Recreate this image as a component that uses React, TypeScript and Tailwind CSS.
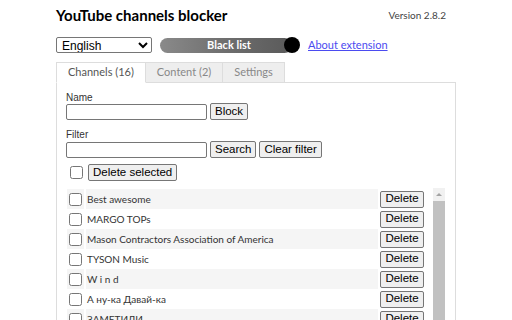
import { useState } from 'react';

const channels = [
  'Best awesome',
  'MARGO TOPs',
  'Mason Contractors Association of America',
  'TYSON Music',
  'W i n d',
  'А ну-ка Давай-ка',
  'ЗАМЕТИЛИ',
];

function Btn({ children, className = '' }: { children: React.ReactNode; className?: string }) {
  return (
    <button
      className={`h-[17px] px-[4px] bg-[#efefef] border border-[#767676] rounded-[2px] text-[11.5px] leading-none text-black font-['Liberation_Sans',sans-serif] ${className}`}
    >
      {children}
    </button>
  );
}

function Box() {
  return <input type="checkbox" className="m-0 w-[13px] h-[13px] accent-gray-600" />;
}

export default function App() {
  const [tab] = useState(0);
  const tabs = ['Channels (16)', 'Content (2)', 'Settings'];

  return (
    <div className="w-full h-[320px] overflow-hidden bg-white">
      <div className="w-[400px] mx-auto font-['Lato',sans-serif] text-[#333]">
        {/* Header */}
        <div className="flex justify-between items-start pt-[5px]">
          <h1 className="text-[15px] font-bold text-black leading-[20px]">YouTube channels blocker</h1>
          <span className="text-[10px] text-[#444] mt-[3px] mr-[10px]">Version 2.8.2</span>
        </div>

        {/* Controls */}
        <div className="flex items-center mt-[12px] h-[16px]">
          <select className="w-[96px] h-[16px] border border-[#767676] rounded-[2px] text-[12px] leading-none px-[1px] font-['Liberation_Sans',sans-serif] text-black">
            <option>English</option>
          </select>
          <div className="flex items-center ml-[8px]">
            <div className="w-[132px] h-[15px] rounded-full bg-gradient-to-r from-[#8a8a8a] via-[#6e6e6e] to-[#5a5a5a] flex items-center justify-center text-white text-[11px] font-bold pl-[6px]">
              Black list
            </div>
            <div className="w-[16px] h-[16px] rounded-full bg-black -ml-[8px]" />
          </div>
          <a href="#" className="ml-[8px] text-[11px] text-[#4b4bf0] underline">About extension</a>
        </div>

        {/* Tabs */}
        <div className="flex mt-[9px]">
          {tabs.map((t, i) => (
            <div
              key={t}
              className={`h-[21px] px-[11px] flex items-center text-[11px] border border-[#ddd] -mb-px ${
                i === tab ? 'bg-white border-b-white text-[#555]' : 'bg-[#eee] text-[#888] border-l-0'
              }`}
            >
              {t}
            </div>
          ))}
        </div>

        {/* Panel */}
        <div className="border border-[#ddd] h-[260px] pl-[9px] pr-[9px] pt-[10px]">
          <div className="text-[10px] text-[#333] leading-[10px] font-['Liberation_Sans',sans-serif]">Name</div>
          <div className="flex items-center gap-[3px]">
            <input className="w-[141px] h-[16px] border border-[#767676] rounded-[2px]" />
            <Btn>Block</Btn>
          </div>

          <div className="text-[10px] text-[#333] leading-[10px] mt-[10px] font-['Liberation_Sans',sans-serif]">Filter</div>
          <div className="flex items-center gap-[3px] mt-[1px]">
            <input className="w-[141px] h-[16px] border border-[#767676] rounded-[2px]" />
            <Btn>Search</Btn>
            <Btn>Clear filter</Btn>
          </div>

          <div className="flex items-center mt-[6px] pl-[4px] gap-[5px]">
            <Box />
            <Btn>Delete selected</Btn>
          </div>

          {/* Channel list */}
          <div className="flex mt-[7px]">
            <div className="w-[358px] pl-px pt-px flex flex-col">
              {channels.map((c, i) => (
                <div key={c} className="flex h-[20px] gap-[2px]">
                  <div className={`w-[17px] flex items-center justify-center ${i % 2 === 0 ? 'bg-[#f5f5f5]' : ''}`}>
                    <Box />
                  </div>
                  <div className={`flex-1 flex items-center pl-[1px] text-[10px] text-[#333] ${i % 2 === 0 ? 'bg-[#f5f5f5]' : ''}`}>
                    {c}
                  </div>
                  <div className="w-[44px] flex items-center">
                    <Btn className="w-[44px] px-0">Delete</Btn>
                  </div>
                </div>
              ))}
            </div>
            {/* Scrollbar */}
            <div className="ml-[9px] w-[12px] flex flex-col">
              <div className="h-[13px] bg-[#f1f1f1] flex items-center justify-center">
                <div className="w-0 h-0 border-l-[3px] border-r-[3px] border-b-[3px] border-l-transparent border-r-transparent border-b-[#a3a3a3]" />
              </div>
              <div className="flex-1 bg-[#c1c1c1]" />
            </div>
          </div>
        </div>
      </div>
    </div>
  );
}
